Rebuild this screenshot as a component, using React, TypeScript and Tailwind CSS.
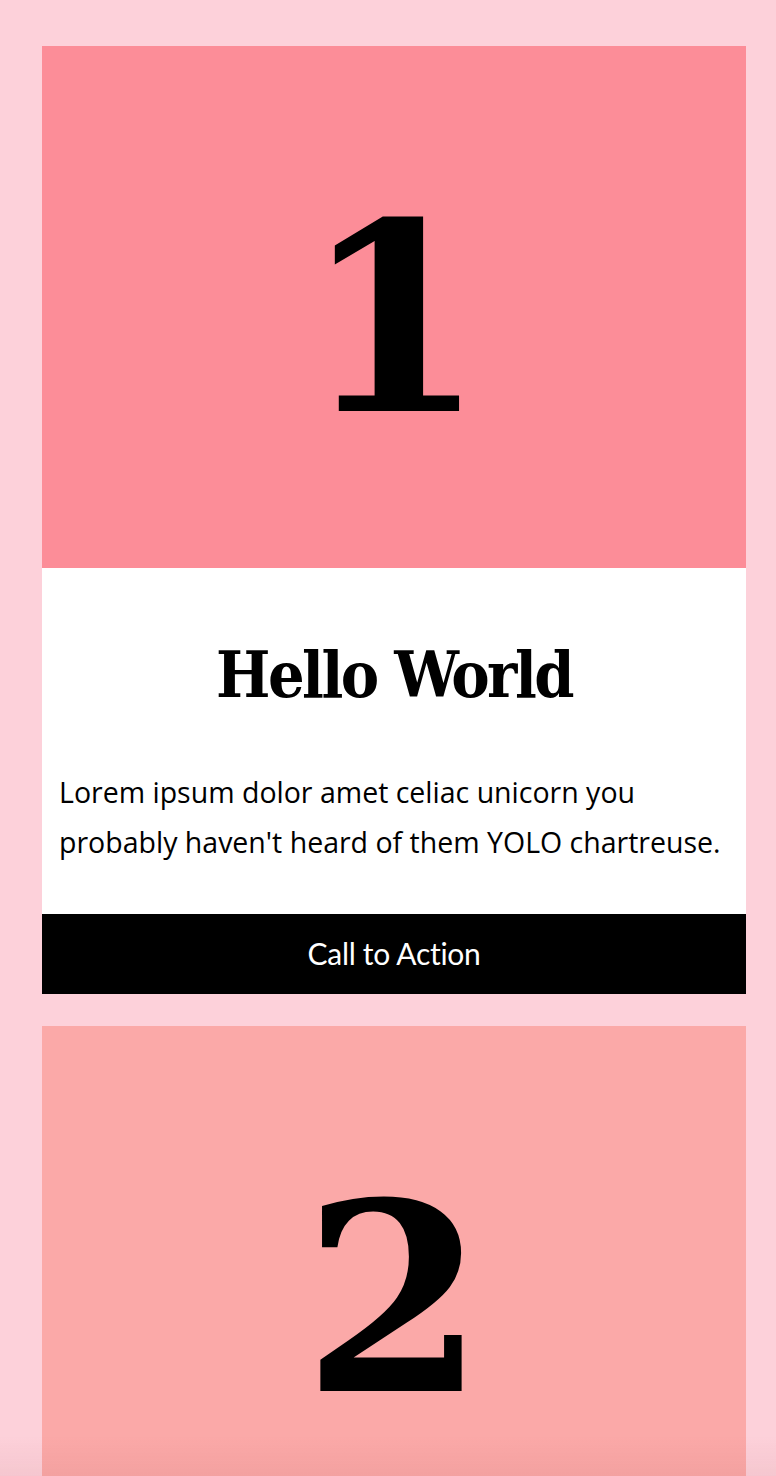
const cards = [
  { n: "1", bg: "bg-[#fc8d98]" },
  { n: "2", bg: "bg-[#fba9a8]" },
  { n: "3", bg: "bg-[#fc8d98]" },
];

function Card({ n, bg }: { n: string; bg: string }) {
  return (
    <div className="bg-white">
      <div className={`h-[522px] ${bg} flex items-center justify-center pt-[24px]`}>
        <span className="font-['DejaVu_Serif',serif] font-bold text-[262px] leading-none text-black">
          {n}
        </span>
      </div>
      <div className="px-[17px] pt-[69px] pb-[47px]">
        <h2 className="text-center font-['DejaVu_Serif_Condensed','DejaVu_Serif',serif] font-bold text-[64px] leading-[1.2] tracking-[-2.5px] text-black">
          Hello World
        </h2>
        <p className="mt-[53px] font-['Open_Sans',sans-serif] text-[28.5px] leading-[50px] text-black">
          Lorem ipsum dolor amet celiac unicorn you probably haven't heard of them YOLO chartreuse.
        </p>
      </div>
      <div className="h-[80px] bg-black flex items-center justify-center">
        <span className="font-['Lato',sans-serif] text-[30px] text-white tracking-[-0.3px]">Call to Action</span>
      </div>
    </div>
  );
}

export default function App() {
  return (
    <div className="min-h-screen bg-[#fdd1da] pt-[46px] pl-[42px] pr-[30px] pb-[32px]">
      <div className="flex flex-col gap-[32px]">
        {cards.map((c) => (
          <Card key={c.n} n={c.n} bg={c.bg} />
        ))}
      </div>
      <div className="pointer-events-none fixed bottom-0 left-0 right-0 h-[40px] bg-gradient-to-b from-transparent to-[rgba(120,40,40,0.06)]" />
    </div>
  );
}
